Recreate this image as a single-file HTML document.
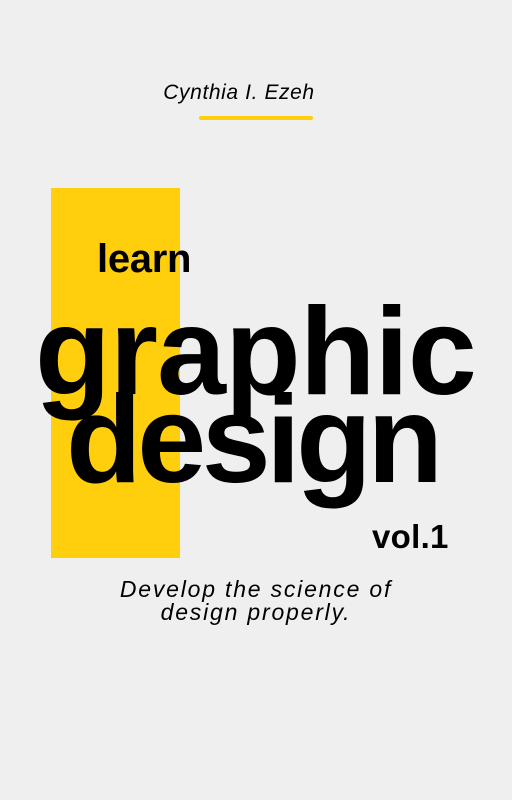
<!DOCTYPE html>
<html><head><meta charset="utf-8"><style>
html,body{margin:0;padding:0}
body{width:512px;height:800px;background:#efefef;position:relative;overflow:hidden;font-family:"Liberation Sans",sans-serif;color:#000}
.t{position:absolute;white-space:nowrap;line-height:1}
</style></head><body>
<div class="t" style="left:0;width:478px;text-align:center;top:82px;font-size:21px;font-style:italic;letter-spacing:0.6px">Cynthia I. Ezeh</div>
<div style="position:absolute;left:199px;top:116px;width:114px;height:4px;border-radius:2px;background:#ffce0c"></div>
<div style="position:absolute;left:51px;top:188px;width:129px;height:370px;background:#ffce0c"></div>
<div class="t" style="left:97px;top:239px;font-size:40px;font-weight:bold;letter-spacing:-0.3px">learn</div>
<div class="t" style="left:35px;top:290px;font-size:124px;font-weight:bold;letter-spacing:-1px">graphic</div>
<div class="t" style="left:66px;top:378px;font-size:124px;font-weight:bold;letter-spacing:-4.5px">design</div>
<div class="t" style="left:372px;top:520px;font-size:33px;font-weight:bold;letter-spacing:0.3px">vol.1</div>
<div class="t" style="left:0;width:512px;text-align:center;top:578px;font-size:23px;font-style:italic;line-height:23px;letter-spacing:1.8px">Develop the science of<br>design properly.</div>
</body></html>
